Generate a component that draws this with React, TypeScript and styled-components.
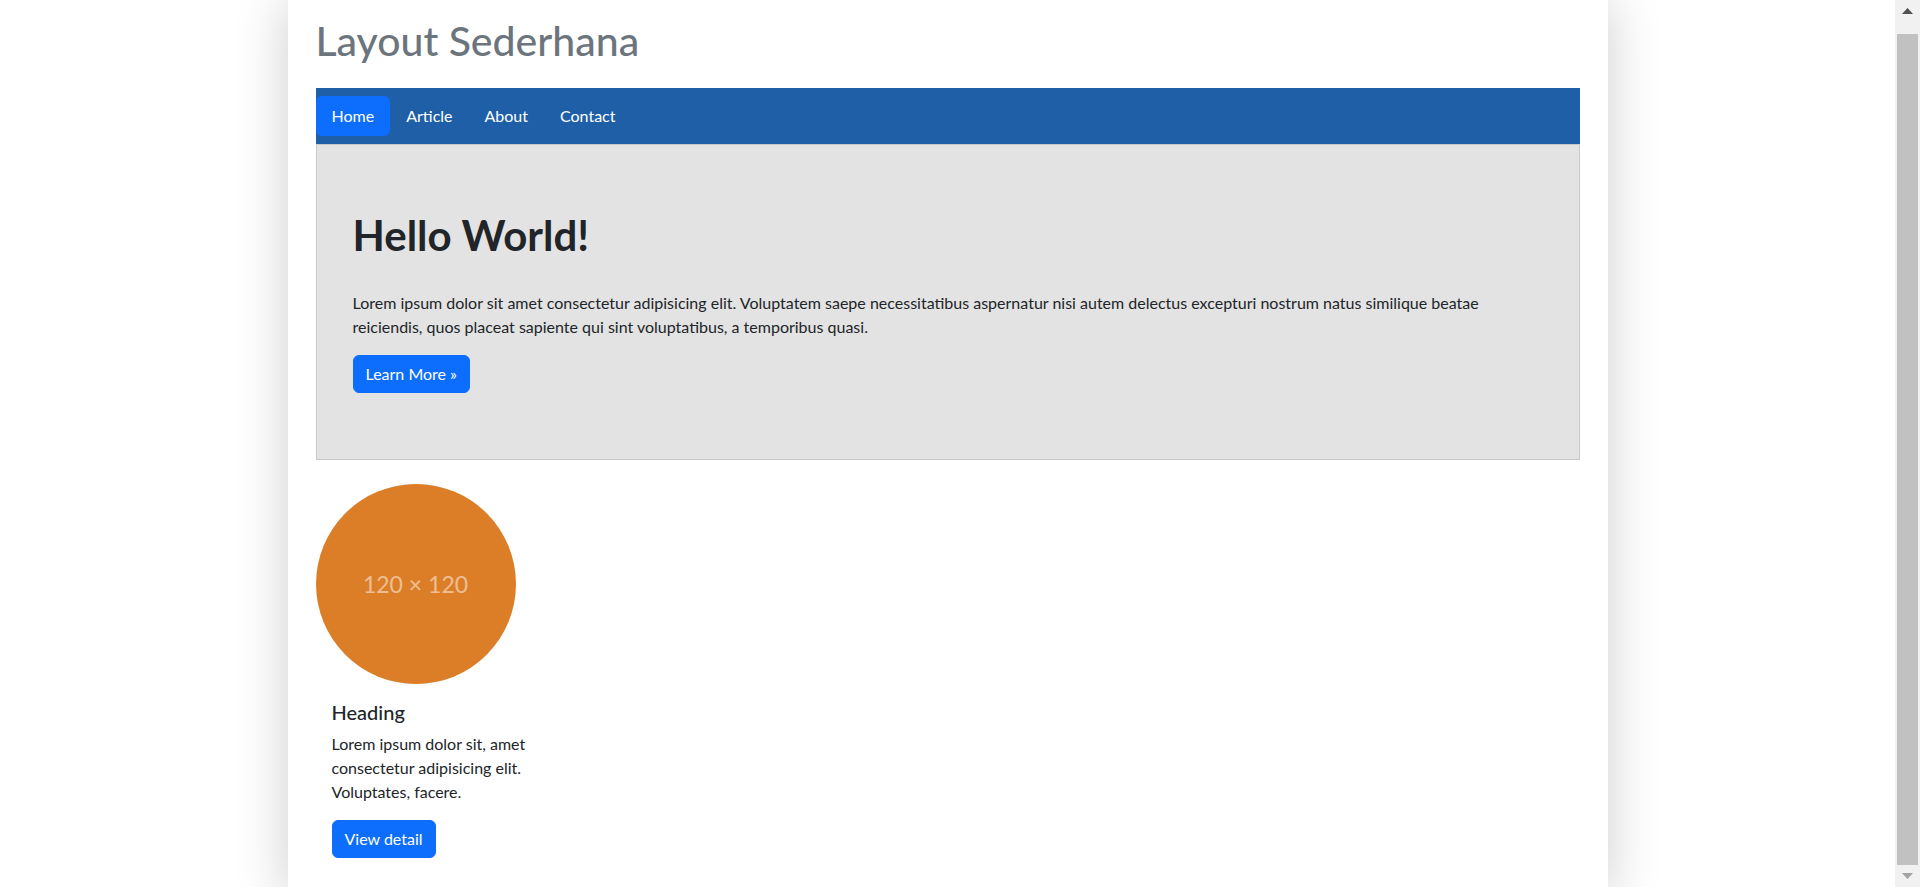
import React from 'react';
import styled, { createGlobalStyle } from 'styled-components';

const FONT = `Lato, "Open Sans", sans-serif`;

const GlobalStyle = createGlobalStyle`
  html, body { margin: 0; padding: 0; background: #fff; overflow: hidden; }
  body { font-family: ${FONT}; font-size: 16px; line-height: 1.5; color: #212529; }
  * { box-sizing: border-box; }
`;

const Screen = styled.div`
  display: flex;
  width: 1920px;
  height: 887px;
  overflow: hidden;
`;

const Viewport = styled.div`
  flex: 1;
  min-width: 0;
  height: 887px;
  overflow: hidden;
`;

const Container = styled.div`
  width: 1320px;
  min-height: 887px;
  margin: 0 auto;
  padding: 0 28px 40px;
  background: #fff;
  box-shadow: 0 0 50px rgba(0, 0, 0, 0.2);
`;

const SiteTitle = styled.h1`
  margin: 0;
  height: 88px;
  padding-top: 15.5px;
  font-size: 41px;
  line-height: 1.2;
  font-weight: 500;
  color: #6c757d;
`;

const NavBar = styled.nav`
  display: flex;
  align-items: center;
  height: 56px;
  padding: 8px 0;
  background: #1f5fa8;
`;

const NavLink = styled.a<{ $active?: boolean }>`
  display: block;
  padding: 8px 16px;
  font-size: 16px;
  line-height: 24px;
  color: #fff;
  text-decoration: none;
  border-radius: 6px;
  background: ${(p) => (p.$active ? '#0d6efd' : 'transparent')};
`;

const Hero = styled.section`
  border: 1px solid #c8c8c8;
  background: #e3e3e3;
  padding: 65px 36px 66px;
`;

const HeroTitle = styled.h2`
  margin: 0 0 30.5px;
  font-size: 42px;
  line-height: 1.2;
  font-weight: 700;
  color: #212529;
`;

const HeroText = styled.p`
  margin: 0 0 16px;
  font-size: 16px;
  line-height: 24px;
`;

const Button = styled.a`
  display: inline-block;
  padding: 6px 12px;
  font-size: 16px;
  line-height: 24px;
  color: #fff;
  background: #0d6efd;
  border: 1px solid #0d6efd;
  border-radius: 6px;
  text-decoration: none;
`;

const Cards = styled.div`
  display: flex;
  margin-top: 24px;
`;

const Card = styled.div`
  width: 232px;
`;

const Avatar = styled.div`
  width: 200px;
  height: 200px;
  border-radius: 50%;
  background: #dc7e28;
  display: flex;
  align-items: center;
  justify-content: center;
  font-size: 23px;
  color: rgba(255, 255, 255, 0.5);
`;

const CardBody = styled.div`
  padding: 16px 16px 0;
`;

const CardTitle = styled.h5`
  margin: 0 0 8px;
  font-size: 20px;
  line-height: 1.2;
  font-weight: 500;
`;

const CardText = styled.p`
  margin: 0 0 16px;
`;

const Scrollbar = styled.div`
  width: 25px;
  height: 887px;
  background: #f1f1f1;
  display: flex;
  flex-direction: column;
`;

const ScrollButton = styled.div`
  height: 22px;
  display: flex;
  align-items: center;
  justify-content: center;
`;

const Thumb = styled.div`
  flex: 1;
  margin: 12px 2px 0;
  background: #c1c1c1;
`;

const UpArrow = ({ color }: { color: string }) => (
  <svg width="11" height="6" viewBox="0 0 11 6"><polygon points="5.5,0 11,6 0,6" fill={color} /></svg>
);
const DownArrow = ({ color }: { color: string }) => (
  <svg width="11" height="6" viewBox="0 0 11 6"><polygon points="0,0 11,0 5.5,6" fill={color} /></svg>
);

export default function App() {
  return (
    <>
      <GlobalStyle />
      <Screen>
        <Viewport>
          <Container>
            <SiteTitle>Layout Sederhana</SiteTitle>
            <NavBar>
              <NavLink href="#" $active>Home</NavLink>
              <NavLink href="#">Article</NavLink>
              <NavLink href="#">About</NavLink>
              <NavLink href="#">Contact</NavLink>
            </NavBar>
            <Hero>
              <HeroTitle>Hello World!</HeroTitle>
              <HeroText>
                Lorem ipsum dolor sit amet consectetur adipisicing elit. Voluptatem saepe necessitatibus aspernatur nisi autem delectus excepturi nostrum natus similique beatae reiciendis, quos placeat sapiente qui sint voluptatibus, a temporibus quasi.
              </HeroText>
              <Button href="#">Learn More »</Button>
            </Hero>
            <Cards>
              <Card>
                <Avatar>120 × 120</Avatar>
                <CardBody>
                  <CardTitle>Heading</CardTitle>
                  <CardText>Lorem ipsum dolor sit, amet consectetur adipisicing elit. Voluptates, facere.</CardText>
                  <Button href="#">View detail</Button>
                </CardBody>
              </Card>
            </Cards>
          </Container>
        </Viewport>
        <Scrollbar>
          <ScrollButton><UpArrow color="#505050" /></ScrollButton>
          <Thumb />
          <ScrollButton><DownArrow color="#a3a3a3" /></ScrollButton>
        </Scrollbar>
      </Screen>
    </>
  );
}
